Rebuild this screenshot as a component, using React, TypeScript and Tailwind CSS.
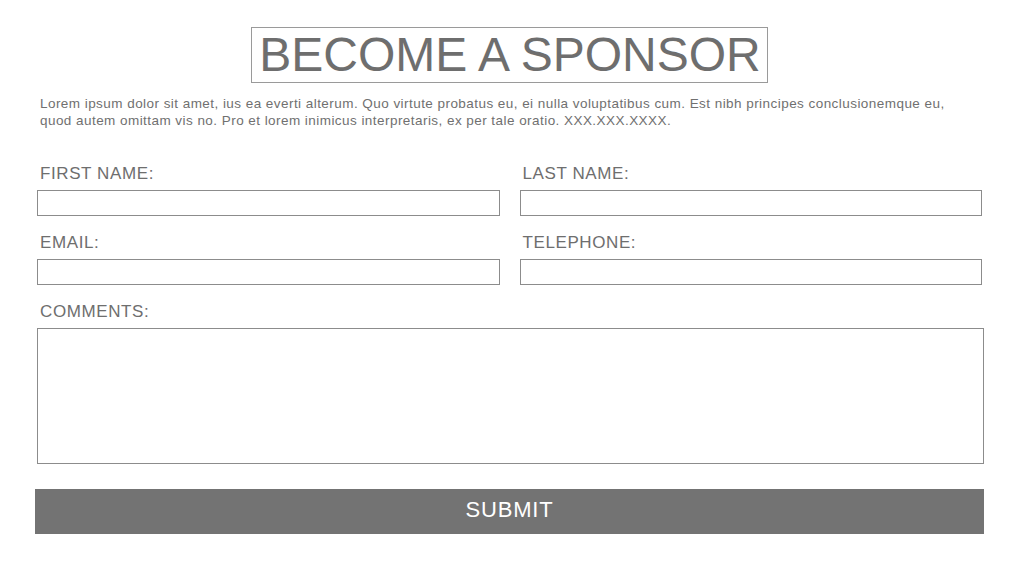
export default function App() {
  const font = { fontFamily: '"Liberation Sans", Arial, sans-serif' };
  return (
    <div className="w-[1024px] h-[565px] bg-white text-[#6e6e6e]" style={font}>
      <div className="flex justify-center pt-[27px] pr-[5px]">
        <h1 className="border border-[#9a9a9a] h-[56px] pl-[7px] pr-[6px] flex items-center text-[48px] leading-none text-[#6e6e6e]">
          BECOME A SPONSOR
        </h1>
      </div>
      <p className="ml-[40px] w-[930px] mt-[12px] text-[13.5px] tracking-[0.45px] leading-[17px] text-[#707070]">
        Lorem ipsum dolor sit amet, ius ea everti alterum. Quo virtute probatus eu, ei nulla voluptatibus cum. Est nibh principes conclusionemque eu, quod autem omittam vis no. Pro et lorem inimicus interpretaris, ex per tale oratio. XXX.XXX.XXXX.
      </p>
      <form className="pl-[37px] pr-[42px] mt-[36px]" onSubmit={(e) => e.preventDefault()}>
        <div className="grid grid-cols-2 gap-x-[20px]">
          <Field label="FIRST NAME:" />
          <Field label="LAST NAME:" />
          <Field label="EMAIL:" />
          <Field label="TELEPHONE:" />
        </div>
        <label className="block">
          <span className="block pl-[3px] text-[17px] tracking-[0.6px] leading-[18px]">COMMENTS:</span>
          <textarea className="block w-[947px] h-[136px] mt-[7px] border border-[#8c8c8c] resize-none outline-none" />
        </label>
        <button
          type="submit"
          className="block w-[949px] -ml-[2px] h-[45px] mt-[25px] pb-[3px] bg-[#737373] text-white text-[22px] tracking-[0.8px] leading-none"
        >
          SUBMIT
        </button>
      </form>
    </div>
  );
}

function Field({ label }: { label: string }) {
  return (
    <label className="block mb-[18px]">
      <span className="block pl-[3px] text-[17px] tracking-[0.6px] leading-[18px]">{label}</span>
      <input type="text" className="block w-full h-[26px] mt-[7px] border border-[#8c8c8c] outline-none" />
    </label>
  );
}
